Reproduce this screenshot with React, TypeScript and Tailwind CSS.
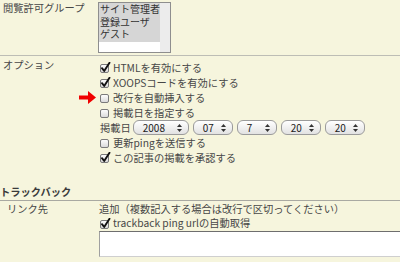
import React from "react";

const Check = ({ checked }: { checked: boolean }) => (
  <svg width="11" height="11" viewBox="0 0 11 11" className="mr-[2px] shrink-0">
    <defs>
      <linearGradient id="cbg" x1="0" y1="0" x2="0" y2="1">
        <stop offset="0" stopColor="#ffffff" />
        <stop offset="1" stopColor="#d8d8d8" />
      </linearGradient>
    </defs>
    <rect x="0.5" y="2.5" width="8" height="8" rx="1.5" fill="url(#cbg)" stroke="#7a7a7a" />
    {checked && (
      <path d="M2 6.2 L4.2 9 L9.5 0.8" fill="none" stroke="#111" strokeWidth="1.9" strokeLinecap="round" strokeLinejoin="round" />
    )}
  </svg>
);

const Opt = ({ checked, label, arrow }: { checked: boolean; label: string; arrow?: boolean }) => (
  <div className="relative flex items-center h-[15px] whitespace-nowrap">
    {arrow && (
      <svg width="18" height="13" viewBox="0 0 18 13" className="absolute left-[-21px] top-[1px]">
        <path d="M0 4.5 H9 V0 L17 6.5 L9 13 V8.5 H0 Z" fill="#f00000" />
      </svg>
    )}
    <Check checked={checked} />
    <span>{label}</span>
  </div>
);

const Sel = ({ value, w }: { value: string; w: string }) => (
  <div
    className={`${w} h-[15px] flex items-center justify-between pl-[9px] pr-[6px] rounded-[6px] border border-[#9b9b9b] bg-gradient-to-b from-[#ffffff] to-[#e2e2e2] text-[10px] text-[#222] shrink-0`}
  >
    <span className="leading-[13px]">{value}</span>
    <svg width="5" height="8" viewBox="0 0 5 8">
      <path d="M2.5 0 L5 3 H0 Z" fill="#333" />
      <path d="M2.5 8 L5 5 H0 Z" fill="#333" />
    </svg>
  </div>
);

export default function App() {
  return (
    <div
      className="w-[400px] h-[262px] overflow-hidden bg-[#f6f5dd] text-[#474747] text-[10.25px] leading-[15px]"
      style={{ fontFamily: '"Noto Sans CJK JP", "Noto Sans", sans-serif' }}
    >
      {/* Row 1 */}
      <div className="flex h-[56px] border-b border-[#bdbdb5]">
        <div className="w-[98px] pl-[3px] shrink-0">閲覧許可グループ</div>
        <div className="mt-[2px] w-[73px] h-[51px] border border-[#8e8e8e] bg-white flex overflow-hidden">
          <div className="flex-1 flex flex-col min-w-0">
            <div className="bg-[#d6d6d6] text-[10px] leading-[12.7px] pb-[1px] pl-[1px] text-[#333] whitespace-nowrap">
              <div>サイト管理者</div>
              <div>登録ユーザ</div>
              <div>ゲスト</div>
            </div>
          </div>
          <div className="w-[10px] bg-[#ececec] shrink-0" />
        </div>
      </div>

      {/* Row 2 */}
      <div className="flex">
        <div className="w-[100px] pl-[3px] pt-[1px] shrink-0">オプション</div>
        <div className="flex flex-col pt-[4px]">
          <Opt checked label="HTMLを有効にする" />
          <Opt checked label="XOOPSコードを有効にする" />
          <Opt checked={false} label="改行を自動挿入する" arrow />
          <Opt checked={false} label="掲載日を指定する" />
          <div className="flex items-center h-[15px] gap-[4px] whitespace-nowrap">
            <span className="mr-[-2px]">掲載日</span>
            <Sel value="2008" w="w-[56px]" />
            <Sel value="07" w="w-[40px]" />
            <Sel value="7" w="w-[40px]" />
            <Sel value="20" w="w-[40px]" />
            <Sel value="20" w="w-[40px]" />
          </div>
          <Opt checked={false} label="更新pingを送信する" />
          <Opt checked label="この記事の掲載を承認する" />
        </div>
      </div>

      {/* Heading */}
      <div className="mt-[19px] pb-[1px] border-b border-[#a9a9a2] font-bold text-[#3a3a3a]">
        トラックバック
      </div>

      {/* Row 3 */}
      <div className="flex">
        <div className="w-[99px] pl-[7px] pt-[1px] shrink-0 leading-[14px]">リンク先</div>
        <div className="flex-1 flex flex-col pt-[1px] leading-[14px]">
          <div className="whitespace-nowrap h-[14px]">追加（複数記入する場合は改行で区切ってください）</div>
          <div className="flex items-center h-[14px] pl-[1px] whitespace-nowrap">
            <Check checked />
            <span>trackback ping urlの自動取得</span>
          </div>
          <div className="h-[26px] mt-[1px] bg-white border-t border-t-[#6e6e6e] border-l border-l-[#a0a0a0] border-b border-b-[#cfcfcf]" />
        </div>
      </div>
    </div>
  );
}
